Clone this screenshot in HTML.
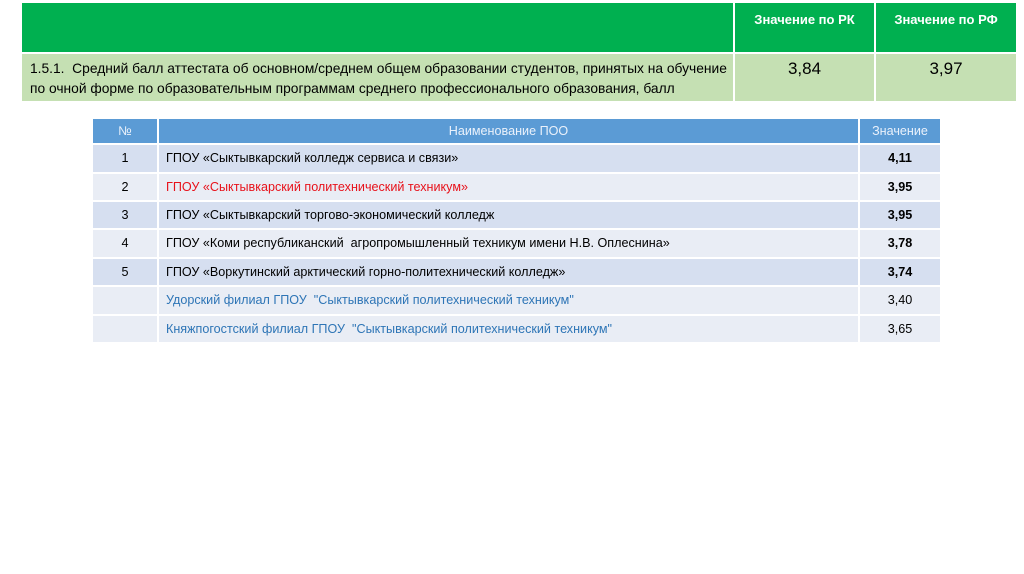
<!DOCTYPE html>
<html><head><meta charset="utf-8"><style>
body{margin:0;width:1024px;height:574px;background:#fff;position:relative;font-family:"Liberation Sans",sans-serif;overflow:hidden}
.a{position:absolute;box-sizing:border-box}
.g{background:#00b050}
.lg{background:#c5e0b3}
.hd{color:#fff;font-weight:bold;font-size:13px;text-align:center;padding-top:9px}
.t{font-family:"Liberation Sans",sans-serif;font-size:12.6px;white-space:nowrap}
.b{background:#5b9bd5;color:#eaf1fb}
.r1{background:#d6dff0}.r2{background:#e9edf5}
</style></head><body>
<div class="a g" style="left:22px;top:3px;width:711px;height:49px"></div>
<div class="a g hd" style="left:735px;top:3px;width:139px;height:49px">Значение по РК</div>
<div class="a g hd" style="left:876px;top:3px;width:140px;height:49px">Значение по РФ</div>
<div class="a lg" style="left:22px;top:54px;width:711px;height:47px;font-size:13.8px;line-height:20px;padding:5px 0 0 8px;white-space:nowrap">1.5.1.&nbsp; Средний балл аттестата об основном/среднем общем образовании студентов, принятых на обучение<br>по очной форме по образовательным программам среднего профессионального образования, балл</div>
<div class="a lg" style="left:735px;top:54px;width:139px;height:47px;text-align:center;font-size:17px;padding-top:5px">3,84</div>
<div class="a lg" style="left:876px;top:54px;width:140px;height:47px;text-align:center;font-size:17px;padding-top:5px">3,97</div>

<div class="a b t" style="left:93px;top:119px;width:64px;height:24px;text-align:center;line-height:24px">№</div>
<div class="a b t" style="left:159px;top:119px;width:699px;height:24px;text-align:center;line-height:24px">Наименование ПОО</div>
<div class="a b t" style="left:860px;top:119px;width:80px;height:24px;text-align:center;line-height:24px">Значение</div>

<div class="a r1 t" style="left:93px;top:145px;width:64px;height:27px;line-height:27px;text-align:center">1</div>
<div class="a r1 t" style="left:159px;top:145px;width:699px;height:27px;line-height:27px;padding-left:7px">ГПОУ «Сыктывкарский колледж сервиса и связи»</div>
<div class="a r1 t" style="left:860px;top:145px;width:80px;height:27px;line-height:27px;text-align:center;font-weight:bold">4,11</div>

<div class="a r2 t" style="left:93px;top:174px;width:64px;height:26px;line-height:26px;text-align:center">2</div>
<div class="a r2 t" style="left:159px;top:174px;width:699px;height:26px;line-height:26px;padding-left:7px;color:#e8121b">ГПОУ «Сыктывкарский политехнический техникум»</div>
<div class="a r2 t" style="left:860px;top:174px;width:80px;height:26px;line-height:26px;text-align:center;font-weight:bold">3,95</div>

<div class="a r1 t" style="left:93px;top:202px;width:64px;height:26px;line-height:26px;text-align:center">3</div>
<div class="a r1 t" style="left:159px;top:202px;width:699px;height:26px;line-height:26px;padding-left:7px">ГПОУ «Сыктывкарский торгово-экономический колледж</div>
<div class="a r1 t" style="left:860px;top:202px;width:80px;height:26px;line-height:26px;text-align:center;font-weight:bold">3,95</div>

<div class="a r2 t" style="left:93px;top:230px;width:64px;height:27px;line-height:27px;text-align:center">4</div>
<div class="a r2 t" style="left:159px;top:230px;width:699px;height:27px;line-height:27px;padding-left:7px">ГПОУ «Коми республиканский&nbsp; агропромышленный техникум имени Н.В. Оплеснина»</div>
<div class="a r2 t" style="left:860px;top:230px;width:80px;height:27px;line-height:27px;text-align:center;font-weight:bold">3,78</div>

<div class="a r1 t" style="left:93px;top:259px;width:64px;height:26px;line-height:26px;text-align:center">5</div>
<div class="a r1 t" style="left:159px;top:259px;width:699px;height:26px;line-height:26px;padding-left:7px">ГПОУ «Воркутинский арктический горно-политехнический колледж»</div>
<div class="a r1 t" style="left:860px;top:259px;width:80px;height:26px;line-height:26px;text-align:center;font-weight:bold">3,74</div>

<div class="a r2 t" style="left:93px;top:287px;width:64px;height:27px"></div>
<div class="a r2 t" style="left:159px;top:287px;width:699px;height:27px;line-height:27px;padding-left:7px;color:#2e75b6">Удорский филиал ГПОУ&nbsp; "Сыктывкарский политехнический техникум"</div>
<div class="a r2 t" style="left:860px;top:287px;width:80px;height:27px;line-height:27px;text-align:center">3,40</div>

<div class="a r2 t" style="left:93px;top:316px;width:64px;height:26px"></div>
<div class="a r2 t" style="left:159px;top:316px;width:699px;height:26px;line-height:26px;padding-left:7px;color:#2e75b6">Княжпогостский филиал ГПОУ&nbsp; "Сыктывкарский политехнический техникум"</div>
<div class="a r2 t" style="left:860px;top:316px;width:80px;height:26px;line-height:26px;text-align:center">3,65</div>
</body></html>
